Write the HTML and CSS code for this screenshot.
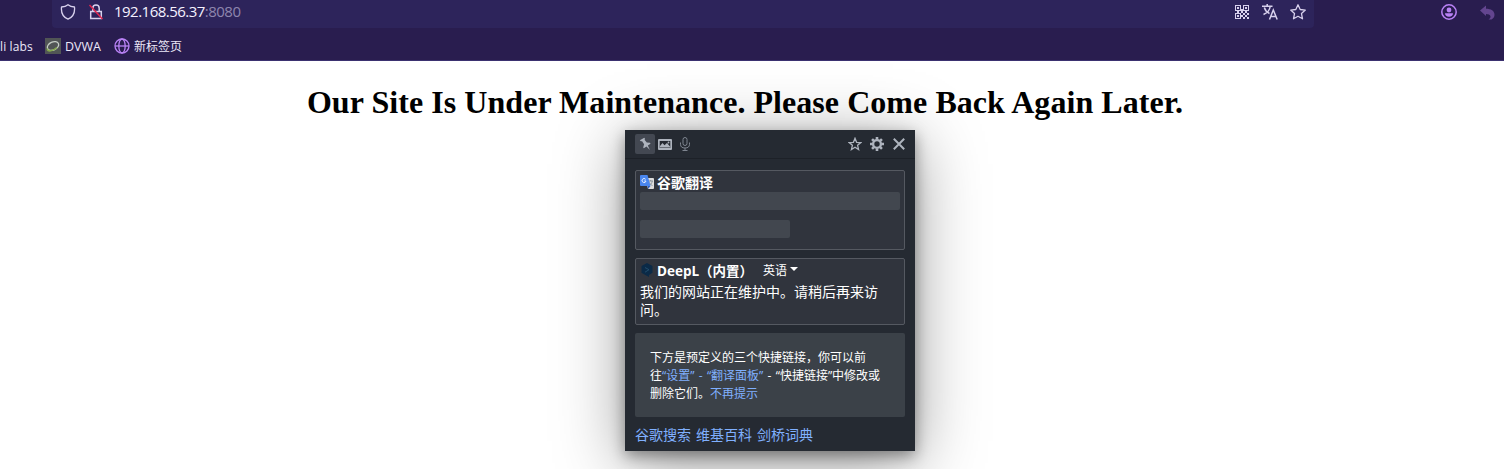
FILE: index.html
```html
<!DOCTYPE html>
<html lang="zh-CN">
<head>
<meta charset="utf-8">
<title>192.168.56.37:8080</title>
<link rel="stylesheet" href="styles.css">
</head>
<body>
<header class="browser">
  <div class="toolbar">
    <div class="urlbar">
      <svg class="ic" width="16" height="16" viewBox="0 0 16 16" fill="none" stroke="currentColor" stroke-width="1.3" stroke-linejoin="round"><path d="M8 .8C6.400 2.200 4 3 1.500 3c-.5 5 1 9.800 6.500 12.200C13.500 12.800 15 8 14.500 3 12 3 9.600 2.200 8 .8z"/></svg>
      <svg class="ic lock" width="16" height="16" viewBox="0 0 16 16" fill="none" stroke="currentColor" stroke-width="1.500"><path d="M4.800 7V4.200a3.200 3.200 0 0 1 6.400 0V7M2.700 7.500h10.600v7H2.700z"/><path d="M1.500 1l13 14" stroke="#e22850"/></svg>
      <div class="address">192.168.56.37<span class="port">:8080</span></div>
      <svg class="ic qr" width="14" height="14" viewBox="0 0 14 14" fill="currentColor" shape-rendering="crispEdges"><path fill-rule="evenodd" d="M0 0h6v6H0zM1 1v4h4V1zM8 0h6v6H8zM9 1v4h4V1zM0 8h6v6H0zM1 9v4h4V9zM2 2h2v2H2zM10 2h2v2h-2zM2 10h2v2H2z"/><path d="M6 4h2v2H6zM6 6h2v2H6zM2 6h2v2H2zM10 6h2v2h-2zM8 8h2v2H8zM12 8h2v2h-2zM10 10h2v2h-2zM8 12h2v2H8zM12 12h2v2h-2zM6 10h2v2H6z"/></svg>
      <svg class="ic" width="16" height="16" viewBox="0 0 16 16" fill="none" stroke="currentColor" stroke-width="1.500"><path d="M0 2.300h10.500M5.200 0v2.300M1.500 10.500C5 9 7.700 6 8.200 2.500M2.300 3.500C3.200 6.500 5 8.400 7.500 9.500M7.500 15.500L11.300 6l3.900 9.500M8.800 12.500h5.200"/></svg>
      <svg class="ic star" width="16" height="16" viewBox="0 0 16 16" fill="none" stroke="currentColor" stroke-width="1.300" stroke-linejoin="round"><path d="M8 .8l2.200 4.700 5.100.6-3.800 3.500 1 5.200L8 12.300l-4.500 2.500 1-5.200L.7 6.100l5.100-.6z"/></svg>
    </div>
    <svg class="account" width="16" height="16" viewBox="0 0 16 16"><circle cx="8" cy="8" r="7.200" fill="none" stroke="currentColor" stroke-width="1.500"/><circle cx="8" cy="6" r="2.400" fill="currentColor"/><path d="M4 9.300h8c0 2-1.700 3.400-4 3.400s-4-1.400-4-3.400z" fill="currentColor"/></svg>
    <svg class="undo" width="15" height="15" viewBox="0 0 15 15"><path d="M0 5.500L6 .5v3.200c5 0 8.500 2 8.500 6 0 2-1 3.500-3 4.800h-3c3.500-2 2.500-5.500-2.500-5.500v2z" fill="currentColor"/></svg>
  </div>
  <nav class="bookmarks">
    <span class="cut">li labs</span>
    <svg width="16" height="16" viewBox="0 0 16 16"><path fill="#515555" d="M0 0h16v16H0z"/><ellipse cx="8" cy="8" rx="6" ry="4" transform="rotate(-25 8 8)" fill="none" stroke="#c5cdc5" stroke-width="1.300"/><path d="M2.300 10.500c-.5 4 6.500 2.500 9.500-1" fill="none" stroke="#84a84c" stroke-width="1.500"/></svg>
    <span class="dvwa">DVWA</span>
    <svg class="globe" width="16" height="16" viewBox="0 0 16 16" fill="none" stroke="currentColor" stroke-width="1.300"><circle cx="8" cy="8" r="7"/><ellipse cx="8" cy="8" rx="3.200" ry="7"/><path d="M1 8h14"/></svg>
    <span>新标签页</span>
  </nav>
</header>
<main class="page"><h1>Our Site Is Under Maintenance. Please Come Back Again Later.</h1></main>

<aside class="panel">
  <div class="panel-bar">
    <span class="pin"><svg width="14" height="14" viewBox="0 0 14 14"><path d="M1.800 3.300L6.300.8l.8 1.100-.6.800 2.300 2.900 3.200.2.500.9-2.700 1.700 2.100 4.600-3.400-3.500-2.700 1.800-.6-.8.900-3.200-2-3.100-1.300.1z" fill="currentColor"/></svg></span>
    <svg class="pic" width="14" height="11" viewBox="0 0 14 11"><path fill="currentColor" fill-rule="evenodd" d="M1 0h12q1 0 1 1v9q0 1-1 1H1q-1 0-1-1V1q0-1 1-1zM1.700 2v7h10.600V2z"/><path fill="currentColor" d="M2 8.500V7l2.500-3 2 2.200L9 4l3 3.500v1z"/><circle cx="10.500" cy="3.500" r=".9" fill="currentColor"/></svg>
    <svg class="mic" width="10" height="14" viewBox="0 0 10 14" fill="none" stroke="currentColor"><rect x="3" y=".5" width="4" height="8" rx="2"/><path d="M.5 5.500v1.800a4.500 3.700 0 0 0 9 0V5.500M5 11v2.500M2.500 13.500h5"/></svg>
    <svg class="fav" width="14" height="14" viewBox="0 0 14 14" fill="none" stroke="currentColor" stroke-width="1.300"><path d="M7 1.300l1.600 4 4.200.3-3.200 2.700 1 4.200L7 10.200l-3.600 2.300 1-4.200L1.200 5.600l4.200-.3z"/></svg>
    <svg class="gear" width="14" height="14" viewBox="0 0 14 14" fill="none" stroke="currentColor"><circle cx="7" cy="7" r="3.900" stroke-width="2.400"/><path stroke-width="2.600" d="M7 0v2.500M7 11.500V14M0 7h2.500M11.500 7H14M2.050 2.050l1.800 1.800M10.150 10.150l1.800 1.800M2.050 11.950l1.800-1.800M10.150 3.850l1.800-1.800"/></svg>
    <svg class="close" width="12" height="12" viewBox="0 0 12 12" stroke="currentColor" stroke-width="2"><path d="M.8.8l10.400 10.400M11.200.8L.8 11.200"/></svg>
  </div>
  <div class="panel-body">
    <section class="card google">
      <div class="card-head">
        <svg width="14" height="14" viewBox="0 0 14 14"><path fill="#dcdcdc" d="M5 3h8q1 0 1 1v9q0 1-1 1H8z"/><path d="M8.500 6h4.500M10.700 5v1M12.300 6c-.3 2-1.500 3.500-3 4.300M9.500 7.500c.5 1.500 1.700 2.500 3 3" stroke="#7a8790" fill="none" stroke-width=".8"/><path fill="#4a86ee" d="M1 0h6.500l3 11H1q-1 0-1-1V1q0-1 1-1z"/><path fill="#2f5fc0" d="M7.500 11h3L8 14z"/><path d="M5.600 4.300A2 2 0 1 0 6 6H4.200" fill="none" stroke="#e4eeff"/></svg>
        <b>谷歌翻译</b>
      </div>
      <div class="bar"></div>
      <div class="bar short"></div>
    </section>
    <section class="card deepl">
      <div class="card-head">
        <svg width="14" height="14" viewBox="0 0 14 14"><path fill="#0b2a47" d="M7 0l5.500 3.100v6.700L9 11.900V14l-2.800-1.500L1.500 9.800V3.100z"/><path d="M5 4.500l4 2.200-4 2.500" stroke="#24506f" stroke-width=".9" fill="none"/></svg>
        <b>DeepL（内置）</b>
        <span class="lang">英语</span><i class="caret"></i>
      </div>
      <p>我们的网站正在维护中。请稍后再来访<br>问。</p>
    </section>
    <section class="tip">下方是预定义的三个快捷链接，你可以前<br>往<a>“设置” - “翻译面板”</a> - “快捷链接”中修改或<br>删除它们。<a>不再提示</a></section>
    <nav class="links"><a>谷歌搜索</a><a>维基百科</a><a>剑桥词典</a></nav>
  </div>
</aside>
</body>
</html>
```
FILE: styles.css
```css
* { box-sizing: border-box; }
html, body { height: 100%; }
body { margin: 0; overflow: hidden; background: #fff; font-family: "Open Sans", "Noto Sans CJK SC", sans-serif; }
svg { display: block; flex: none; }
.browser { height: 61px; background: #291d4f; border-bottom: 1px solid #3b3170; color: #ece8f8; }
.toolbar { height: 28px; display: flex; padding-left: 52px; }
.urlbar { width: 1262px; height: 28px; flex: none; background: #2d245b; border-radius: 0 0 4px 4px; display: flex; padding: 4px 8px 0; color: #d8d1ed; }
.lock { margin-left: 12px; }
.address { margin-left: 10px; margin-top: -3px; flex: 1; font: 15px/20px "Open Sans", sans-serif; letter-spacing: -.52px; color: #f5f2ff; white-space: nowrap; }
.port { color: #8e86ae; }
.qr { margin: 1px 13px 0 0; }
.star { margin-left: 12px; }
.account { margin: 4px 0 0 127px; color: #b982f5; }
.undo { margin: 5px 0 0 23px; color: #63458f; }
.bookmarks { height: 36px; display: flex; align-items: center; font-size: 12px; line-height: 16px; white-space: nowrap; }
.bookmarks span { padding-top: 2px; }
.cut { width: 45px; letter-spacing: .12px; }
.bookmarks .dvwa { width: 53px; padding-left: 4px; font-size: 12.500px; }
.globe { color: #b982f5; margin-right: 4px; }
.page { width: 1490px; padding-top: 23px; text-align: center; }
h1 { margin: 0; font: bold 32px/37px "Liberation Serif", serif; letter-spacing: .05px; color: #000; white-space: nowrap; }
/* The translation panel floats over the page. */
.panel { position: absolute; left: 625px; top: 130px; width: 290px; height: 321px; background: #252a32; color: #fff; box-shadow: 0 5px 14px rgba(0,0,0,.38), 0 12px 64px rgba(0,0,0,.4); }
.panel-bar { height: 29px; display: flex; align-items: center; padding: 0 10px; color: #aeb4be; border-bottom: 1px solid #1d2128; }
.pin { width: 20px; height: 20px; background: #434852; border-radius: 2px; display: grid; place-items: center; }
.pic { margin-left: 3px; }
.mic { margin-left: 8px; color: #7e848f; }
.fav { margin-left: auto; }
.gear { margin-left: 8px; }
.close { margin-left: 9px; }
.panel-body { padding: 11px 10px 0; }
.card { border: 1px solid #555961; border-radius: 2px; background: #30343d; padding: 4px; }
.google { height: 80px; }
.card-head { display: flex; height: 17px; font-size: 13.500px; line-height: 17px; white-space: nowrap; }
.card-head b { margin-left: 3px; font-weight: 700; }
.google b { font-size: 14px; line-height: 15px; }
.deepl b { width: 96px; }
.bar { height: 18px; background: #42474f; border-radius: 2px; }
.short { width: 150px; margin-top: 10px; }
.deepl { height: 67px; margin-top: 8px; }
.lang { font-size: 12px; margin-left: 10px; line-height: 16px; }
.caret { border: 4px solid transparent; border-top-color: #fff; border-bottom: 0; height: 4px; margin: 4px 0 0 3px; }
p { margin: 3px 0 0; font-size: 14px; line-height: 18px; white-space: nowrap; }
.tip { height: 84px; margin-top: 8px; border-radius: 2px; background: #3b4148; padding: 16px 15px; font-size: 12px; line-height: 18px; word-spacing: 1.200px; white-space: nowrap; }
a { color: #80b0ff; }
.links { display: flex; gap: 5px; margin-top: 8px; font-size: 14px; line-height: 20px; white-space: nowrap; }
```
